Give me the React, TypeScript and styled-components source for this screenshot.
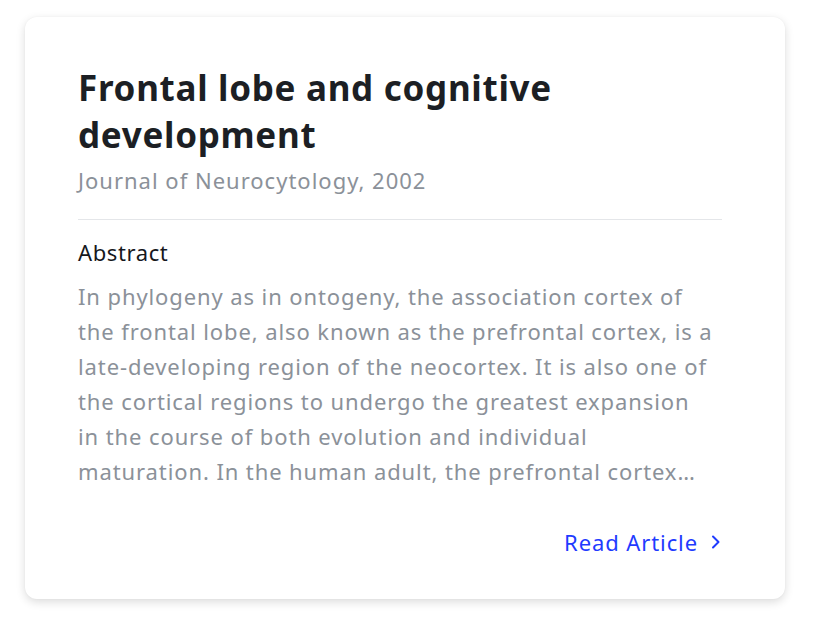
import React from 'react';
import styled, { createGlobalStyle } from 'styled-components';

const GlobalStyle = createGlobalStyle`
  body {
    margin: 0;
    background: #ffffff;
    font-family: 'Noto Sans', 'Open Sans', sans-serif;
  }
`;

const Page = styled.div`
  padding: 17px 28px 34px 25px;
`;

const Card = styled.article`
  width: 760px;
  box-sizing: border-box;
  background: #ffffff;
  border-radius: 12px;
  box-shadow: 0 3px 10px rgba(0, 0, 0, 0.14), 0 0 2px rgba(0, 0, 0, 0.04);
  padding: 47px 63px 42px 53px;
  display: flex;
  flex-direction: column;
`;

const Title = styled.h1`
  margin: 0;
  font-size: 35px;
  line-height: 47px;
  font-weight: 700;
  letter-spacing: 0.7px;
  color: #1c1f24;
`;

const Source = styled.div`
  font-size: 22px;
  line-height: 30px;
  letter-spacing: 1px;
  color: #8b9199;
  margin-top: 7px;
`;

const Divider = styled.hr`
  border: none;
  border-top: 1px solid #e4e6e9;
  margin: 24px 0 16px;
`;

const SectionLabel = styled.h2`
  margin: 0;
  font-size: 22px;
  line-height: 32px;
  font-weight: 400;
  letter-spacing: 0.6px;
  color: #16181c;
`;

const Body = styled.p`
  margin: 11px 0 0;
  font-size: 22px;
  line-height: 35px;
  letter-spacing: 0.9px;
  color: #8b9199;
  display: -webkit-box;
  -webkit-line-clamp: 6;
  -webkit-box-orient: vertical;
  overflow: hidden;
`;

const Footer = styled.div`
  display: flex;
  justify-content: flex-end;
  margin-top: 38px;
`;

const ReadLink = styled.a`
  display: inline-flex;
  align-items: center;
  gap: 12px;
  font-size: 22px;
  line-height: 30px;
  letter-spacing: 0.9px;
  color: #1f3bff;
  text-decoration: none;
  cursor: pointer;
`;

const Chevron = () => (
  <svg width="12" height="18" viewBox="0 0 12 18" fill="none">
    <path d="M3 3.5l5.5 5.5L3 14.5" stroke="#1f3bff" strokeWidth="2" strokeLinecap="round" strokeLinejoin="round" />
  </svg>
);

const App: React.FC = () => {
  return (
    <Page>
      <GlobalStyle />
      <Card>
        <Title>Frontal lobe and cognitive development</Title>
        <Source>Journal of Neurocytology, 2002</Source>
        <Divider />
        <SectionLabel>Abstract</SectionLabel>
        <Body>
          In phylogeny as in ontogeny, the association cortex of
          <br />
          the frontal lobe, also known as the prefrontal cortex, is a
          <br />
          late-developing region of the neocortex. It is also one of
          <br />
          the cortical regions to undergo the greatest expansion
          <br />
          in the course of both evolution and individual
          <br />
          maturation. In the human adult, the prefrontal cortex
          <br />
          constitutes nearly one-third of the neocortex.
        </Body>
        <Footer>
          <ReadLink>
            Read Article
            <Chevron />
          </ReadLink>
        </Footer>
      </Card>
    </Page>
  );
};

export default App;
